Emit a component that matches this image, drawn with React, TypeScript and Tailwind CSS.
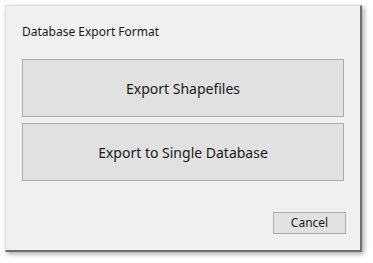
export default function App() {
  return (
    <div
      className="w-[373px] h-[263px] bg-white pt-[5px] pl-[5px]"
      style={{ fontFamily: '"Segoe UI", "Noto Sans", "Liberation Sans", sans-serif' }}
    >
      {/* Dialog window */}
      <div className="w-[357px] h-[247px] bg-[#f0f0f0] border-l border-t border-[#dcdcdc] border-r-2 border-b-2 border-r-[#6e6e6e] border-b-[#6e6e6e] shadow-[2px_2px_5px_rgba(0,0,0,0.35)] flex flex-col px-[16px]">
        <div className="text-[12px] leading-none text-[#1a1a1a] mt-[20px] h-[12px]">
          Database Export Format
        </div>

        <div className="flex flex-col gap-[6px] mt-[21px]">
          <button className="h-[58px] w-[322px] bg-[#e1e1e1] border border-[#adadad] text-[14px] text-[#1a1a1a]">
            Export Shapefiles
          </button>
          <button className="h-[58px] w-[322px] bg-[#e1e1e1] border border-[#adadad] text-[14px] text-[#1a1a1a]">
            Export to Single Database
          </button>
        </div>

        <div className="flex justify-end mt-[31px] mr-[-2px]">
          <button className="w-[73px] h-[22px] bg-[#e1e1e1] border border-[#adadad] text-[12px] text-[#1a1a1a] leading-none">
            Cancel
          </button>
        </div>
      </div>
    </div>
  );
}
